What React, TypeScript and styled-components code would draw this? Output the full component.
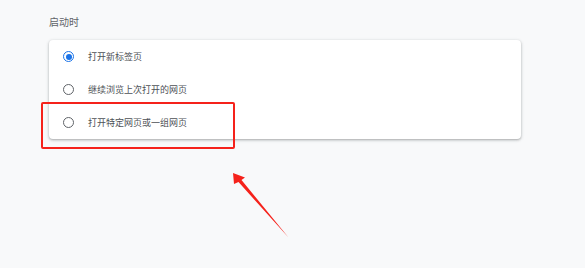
import styled, { createGlobalStyle } from "styled-components";

const GlobalStyle = createGlobalStyle`
  html, body {
    margin: 0;
    padding: 0;
    background-color: #f8f9fa;
  }
  body {
    font-family: "Noto Sans CJK SC", "Noto Sans", sans-serif;
  }
`;

const Page = styled.div`
  position: relative;
  width: 585px;
  height: 268px;
  padding: 15px 0 0 49px;
  box-sizing: border-box;
  overflow: hidden;
`;

const Title = styled.h2`
  margin: 0 0 12px;
  font-size: 10px;
  line-height: 13px;
  font-weight: 400;
  color: #5f6368;
`;

const Card = styled.div`
  width: 472px;
  background-color: #fff;
  border-radius: 4px;
  box-shadow: 0 1px 2px rgba(60, 64, 67, 0.3), 0 1px 3px 1px rgba(60, 64, 67, 0.12);
`;

const Row = styled.label`
  display: flex;
  align-items: center;
  gap: 14px;
  height: 33px;
  padding-left: 14px;
  cursor: pointer;
`;

const Radio = styled.span<{ checked?: boolean }>`
  position: relative;
  width: 11px;
  height: 11px;
  box-sizing: border-box;
  border-radius: 50%;
  border: 1.5px solid ${(p) => (p.checked ? "#1a73e8" : "#5f6368")};
  flex-shrink: 0;

  &::after {
    content: "";
    display: ${(p) => (p.checked ? "block" : "none")};
    position: absolute;
    inset: 1.5px;
    border-radius: 50%;
    background-color: #1a73e8;
  }
`;

const Label = styled.span`
  font-size: 9px;
  line-height: 12px;
  color: #4d5156;
`;

const Highlight = styled.div`
  position: absolute;
  left: 41px;
  top: 102px;
  width: 194px;
  height: 47px;
  box-sizing: border-box;
  border: 2px solid #f5221b;
  border-radius: 2px;
  pointer-events: none;
`;

const Arrow = styled.svg`
  position: absolute;
  left: 0;
  top: 0;
  pointer-events: none;
`;

const options = ["打开新标签页", "继续浏览上次打开的网页", "打开特定网页或一组网页"];

export default function App() {
  const selected = 0;

  return (
    <>
      <GlobalStyle />
      <Page>
        <Title>启动时</Title>
        <Card>
          {options.map((text, i) => (
            <Row key={text}>
              <Radio checked={i === selected} />
              <Label>{text}</Label>
            </Row>
          ))}
        </Card>

        <Highlight />
        <Arrow width="585" height="268" viewBox="0 0 585 268">
          <polygon
            points="233,173 245,177.5 241.5,180 288.5,237.5 238.5,182 234,184"
            fill="#f5221b"
          />
        </Arrow>
      </Page>
    </>
  );
}
